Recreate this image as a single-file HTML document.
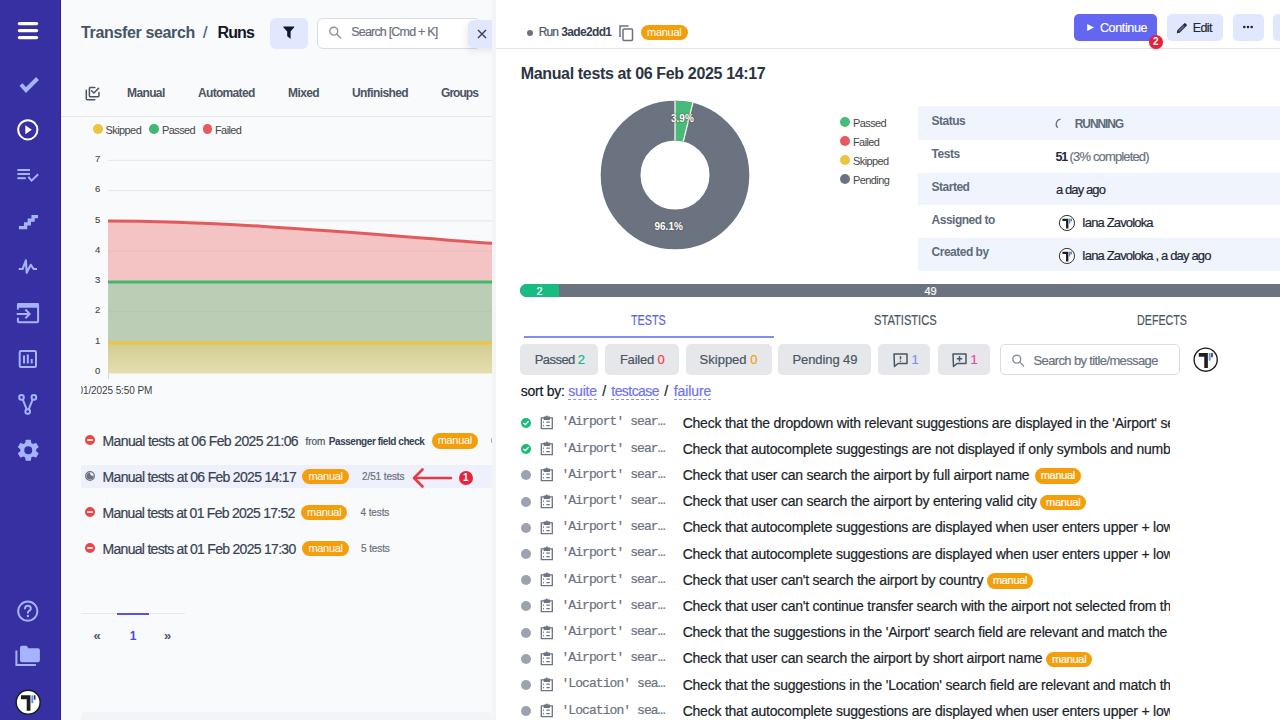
<!DOCTYPE html>
<html><head><meta charset="utf-8">
<style>
*{box-sizing:border-box;margin:0;padding:0}
html,body{width:1280px;height:720px;overflow:hidden;background:#fff;font-family:"Liberation Sans",sans-serif;color:#1f2937}
.a{-webkit-text-stroke:0.2px currentColor}
.a[style*="font-weight:bold"],b{-webkit-text-stroke:0}
.a{position:absolute;white-space:nowrap}
#sb{position:absolute;left:0;top:0;width:61px;height:720px;background:#3730a3;border-right:1px solid #2a2390}
#sb svg{position:absolute}
#lp{position:absolute;left:61px;top:0;width:431px;height:720px;background:#f8fafc;overflow:hidden}
#gut{position:absolute;left:492px;top:0;width:4px;height:720px;background:#f3f4f6}
#rp{position:absolute;left:496px;top:0;width:784px;height:720px;background:#fff;overflow:hidden}
.badge{position:absolute;height:15px;border-radius:8px;background:#f59e0b;color:#fff;font-size:11px;line-height:15px;text-align:center;letter-spacing:-0.3px}
</style></head><body>

<div id="sb">
  <!-- hamburger -->
  <svg style="left:16px;top:20px" width="24" height="22" viewBox="0 0 24 22"><g stroke="#fff" stroke-width="3.4" stroke-linecap="round"><line x1="3.5" y1="3.6" x2="20.5" y2="3.6"/><line x1="3.5" y1="10.6" x2="20.5" y2="10.6"/><line x1="3.5" y1="17.6" x2="20.5" y2="17.6"/></g></svg>
  <!-- check -->
  <svg style="left:17px;top:74px" width="24" height="20" viewBox="0 0 24 20"><path d="M4 10.5 L9 16 L20.5 4.5" fill="none" stroke="#a5b4fc" stroke-width="4" stroke-linejoin="miter"/></svg>
  <!-- play circle -->
  <svg style="left:16px;top:118px" width="24" height="24" viewBox="0 0 24 24"><circle cx="11.8" cy="11.8" r="9.6" fill="none" stroke="#fff" stroke-width="2"/><path d="M9.3 7.3 L15.8 11.8 L9.3 16.3Z" fill="#fff"/></svg>
  <!-- list check -->
  <svg style="left:16px;top:166px" width="24" height="20" viewBox="0 0 24 20"><g stroke="#a5b4fc" stroke-width="2" fill="none" stroke-linecap="butt"><line x1="1.4" y1="4" x2="14" y2="4"/><line x1="1.4" y1="8" x2="14" y2="8"/><line x1="1.4" y1="12.2" x2="9.8" y2="12.2"/><path d="M12.3 10.8 L15.6 14.6 L22.2 8.2"/></g></svg>
  <!-- stairs -->
  <svg style="left:17px;top:211px" width="22" height="20" viewBox="0 0 22 20"><path d="M3.6 16.6 H8.6 V12.9 H12.3 V9.2 H16.1 V5.6 H19.4" fill="none" stroke="#a5b4fc" stroke-width="3.3" stroke-linecap="square"/></svg>
  <!-- pulse -->
  <svg style="left:17px;top:257px" width="22" height="18" viewBox="0 0 22 18"><path d="M1.7 12 H5.6 L8.9 3.4 L9.7 15.8 L13.8 7.8 L16.6 12 H20" fill="none" stroke="#a5b4fc" stroke-width="2.1" stroke-linejoin="round" stroke-linecap="butt"/></svg>
  <!-- import -->
  <svg style="left:15px;top:301px" width="26" height="24" viewBox="0 0 26 24"><g fill="none" stroke="#a5b4fc" stroke-width="2" stroke-linecap="butt"><path d="M2.9 8.6 V4 Q2.9 3 3.9 3 H22.1 Q23.1 3 23.1 4 V20.3 Q23.1 21.3 22.1 21.3 H3.9 Q2.9 21.3 2.9 20.3 V16.8"/><path d="M1.7 12.9 H14.6 M10.4 8.5 L14.6 12.9 L10.4 17.3"/></g><rect x="2" y="2.2" width="22" height="4.6" rx="1.2" fill="#a5b4fc"/></svg>
  <!-- chart -->
  <svg style="left:17px;top:348px" width="22" height="22" viewBox="0 0 22 22"><g fill="none" stroke="#a5b4fc" stroke-width="2"><rect x="2.7" y="2.9" width="16.3" height="16.1" rx="1.3"/><path d="M7 15.6 V7.6 M10.8 15.6 V6.4 M14.7 15.6 V11"/></g></svg>
  <!-- fork -->
  <svg style="left:17px;top:393px" width="22" height="23" viewBox="0 0 22 23"><g fill="none" stroke="#a5b4fc" stroke-width="2"><circle cx="4.5" cy="4.4" r="2.3"/><circle cx="16.9" cy="4.4" r="2.3"/><circle cx="10.7" cy="18.6" r="2.3"/><path d="M5.7 6.4 L9.7 16.3 M15.7 6.4 L11.7 16.3"/></g></svg>
  <!-- gear -->
  <svg style="left:14.55px;top:437.05px" width="26.5" height="26.5" viewBox="0 0 24 24"><path fill="#a5b4fc" d="M19.14 12.94c.04-.3.06-.61.06-.94 0-.32-.02-.64-.07-.94l2.03-1.58a.49.49 0 0 0 .12-.61l-1.92-3.32a.49.49 0 0 0-.59-.22l-2.39.96c-.5-.38-1.03-.7-1.62-.94l-.36-2.54a.48.48 0 0 0-.48-.41h-3.84c-.24 0-.43.17-.47.41l-.36 2.54c-.59.24-1.13.57-1.62.94l-2.39-.96a.48.48 0 0 0-.59.22L2.74 8.87c-.12.21-.08.47.12.61l2.03 1.58c-.05.3-.09.63-.09.94s.02.64.07.94l-2.03 1.58a.49.49 0 0 0-.12.61l1.92 3.32c.12.22.37.29.59.22l2.39-.96c.5.38 1.03.7 1.62.94l.36 2.54c.05.24.24.41.48.41h3.84c.24 0 .44-.17.47-.41l.36-2.54c.59-.24 1.13-.56 1.62-.94l2.39.96c.22.08.47 0 .59-.22l1.92-3.32c.12-.22.07-.47-.12-.61l-2.01-1.58zM12 15.6A3.6 3.6 0 1 1 12 8.4a3.6 3.6 0 0 1 0 7.2z"/></svg>
  <!-- help -->
  <svg style="left:16px;top:598.5px" width="24" height="24" viewBox="0 0 24 24"><circle cx="11.8" cy="12.2" r="9.6" fill="none" stroke="#a5b4fc" stroke-width="2"/><path d="M9 9.6 Q9 6.8 11.9 6.8 Q14.8 6.8 14.8 9.4 Q14.8 11 13 11.8 Q11.9 12.4 11.9 13.8" fill="none" stroke="#a5b4fc" stroke-width="2" stroke-linecap="round"/><circle cx="11.9" cy="17" r="1.2" fill="#a5b4fc"/></svg>
  <!-- folders -->
  <svg style="left:14px;top:644px" width="28" height="24" viewBox="0 0 28 24"><path d="M2.4 6.4 V21.1 H21.9" fill="none" stroke="#a5b4fc" stroke-width="2"/><path d="M6 3.8 Q6 1.8 8 1.8 H12.5 L14.6 4.2 H24 Q25.9 4.2 25.9 6.2 V16.3 Q25.9 18.3 24 18.3 H8 Q6 18.3 6 16.3Z" fill="#a5b4fc"/></svg>
  <!-- avatar -->
  <svg style="left:14.48px;top:687.83px" width="28.34" height="28.34" viewBox="0 0 28 28"><circle cx="14" cy="14" r="11.85" fill="#fff" stroke="#1a1a1a" stroke-width="1.4"/><path d="M6.93 7.24 H16.25 V22.5 H12.57 V11.13 H6.93Z" fill="#1e1e1e"/><rect x="17.18" y="7.24" width="1.84" height="7.78" fill="#5b8def"/><rect x="19.64" y="7.24" width="1.64" height="4.3" fill="#333"/></svg>
</div>

<div id="lp"></div>
<!-- left panel content -->
<div class="a" style="left:81px;top:24.56px;font-size:16px;line-height:1;font-weight:bold;color:#475467;letter-spacing:-0.35px">Transfer search</div>
<div class="a" style="left:203px;top:24.56px;font-size:16px;line-height:1;color:#4b5563">/</div>
<div class="a" style="left:217.5px;top:24.56px;font-size:16px;line-height:1;font-weight:bold;color:#101828;letter-spacing:-0.9px">Runs</div>
<div class="a" style="left:270px;top:17.5px;width:38px;height:31px;border-radius:6px;background:#e0e7ff"></div>
<svg class="a" style="left:282px;top:25px" width="14" height="15" viewBox="0 0 14 15"><path d="M1.6 1.6 H11.9 Q12.6 1.6 12.2 2.2 L8.6 6.6 V13.4 Q8.6 14 8.1 13.6 L5.6 11.6 Q5.2 11.3 5.2 10.8 V6.6 L1.3 2.2 Q0.9 1.6 1.6 1.6Z" fill="#111827"/></svg>
<div class="a" style="left:317.3px;top:17.5px;width:163.4px;height:31px;border-radius:6px;background:#fff;border:1px solid #d9dde3"></div>
<svg class="a" style="left:328px;top:26px" width="14" height="14" viewBox="0 0 14 14"><circle cx="5.75" cy="5.15" r="3.95" fill="none" stroke="#8b929c" stroke-width="1.4"/><line x1="8.7" y1="8.1" x2="12.6" y2="11.9" stroke="#8b929c" stroke-width="1.4" stroke-linecap="round"/></svg>
<div class="a" style="left:351.2px;top:26.42px;font-size:12.5px;line-height:1;color:#6b7280;letter-spacing:-0.8px">Search [Cmd + K]</div>
<div class="a" style="left:467.5px;top:20px;width:29px;height:28px;border-radius:6px 0 0 6px;background:#e0e7ff;box-shadow:-2px 3px 6px rgba(0,0,0,0.08)"></div>
<svg class="a" style="left:477px;top:29px" width="10" height="10" viewBox="0 0 10 10"><path d="M1 1 L9 9 M9 1 L1 9" stroke="#374151" stroke-width="1.4"/></svg>

<svg class="a" style="left:84px;top:85px" width="18" height="17" viewBox="0 0 18 17"><g fill="none" stroke="#4b5563" stroke-width="1.5" stroke-linecap="round" stroke-linejoin="round"><path d="M10.8 2.4 H6.4 Q5.4 2.4 5.4 3.4 V10.8 Q5.4 11.8 6.4 11.8 H13.95 Q14.95 11.8 14.95 10.8 V7.5"/><path d="M7.55 5.8 L9.9 8 L14.6 3.3"/><path d="M2.3 5.3 V13.7 Q2.3 14.7 3.3 14.7 H10.8"/></g></svg>
<div class="a" style="left:127px;top:87.24px;font-size:12px;line-height:1;font-weight:bold;color:#4b5563;letter-spacing:-0.62px">Manual</div>
<div class="a" style="left:198px;top:87.24px;font-size:12px;line-height:1;font-weight:bold;color:#4b5563;letter-spacing:-0.68px">Automated</div>
<div class="a" style="left:288px;top:87.24px;font-size:12px;line-height:1;font-weight:bold;color:#4b5563;letter-spacing:-0.6px">Mixed</div>
<div class="a" style="left:352px;top:87.24px;font-size:12px;line-height:1;font-weight:bold;color:#4b5563;letter-spacing:-0.6px">Unfinished</div>
<div class="a" style="left:441px;top:87.24px;font-size:12px;line-height:1;font-weight:bold;color:#4b5563;letter-spacing:-0.95px">Groups</div>
<div class="a" style="left:61px;top:116px;width:431px;height:1px;background:#e5e7eb"></div>

<div class="a" style="left:93.4px;top:124.4px;width:9.6px;height:9.6px;border-radius:50%;background:#ecc440"></div>
<div class="a" style="left:105.6px;top:124.89px;font-size:11px;line-height:1;color:#464646;-webkit-text-stroke:0;letter-spacing:-0.6px">Skipped</div>
<div class="a" style="left:149px;top:124.4px;width:9.6px;height:9.6px;border-radius:50%;background:#3fb96f"></div>
<div class="a" style="left:162px;top:124.89px;font-size:11px;line-height:1;color:#464646;-webkit-text-stroke:0;letter-spacing:-0.6px">Passed</div>
<div class="a" style="left:202.6px;top:124.4px;width:9.6px;height:9.6px;border-radius:50%;background:#e85a5f"></div>
<div class="a" style="left:215px;top:124.89px;font-size:11px;line-height:1;color:#464646;-webkit-text-stroke:0;letter-spacing:-0.6px">Failed</div>

<div class="a" style="right:1179.8px;top:153.96px;font-size:9.5px;line-height:1;color:#444;-webkit-text-stroke:0.1px #444">7</div><div class="a" style="right:1179.8px;top:184.26px;font-size:9.5px;line-height:1;color:#444;-webkit-text-stroke:0.1px #444">6</div><div class="a" style="right:1179.8px;top:214.56px;font-size:9.5px;line-height:1;color:#444;-webkit-text-stroke:0.1px #444">5</div><div class="a" style="right:1179.8px;top:244.86px;font-size:9.5px;line-height:1;color:#444;-webkit-text-stroke:0.1px #444">4</div><div class="a" style="right:1179.8px;top:275.16px;font-size:9.5px;line-height:1;color:#444;-webkit-text-stroke:0.1px #444">3</div><div class="a" style="right:1179.8px;top:305.46px;font-size:9.5px;line-height:1;color:#444;-webkit-text-stroke:0.1px #444">2</div><div class="a" style="right:1179.8px;top:335.76px;font-size:9.5px;line-height:1;color:#444;-webkit-text-stroke:0.1px #444">1</div><div class="a" style="right:1179.8px;top:366.06px;font-size:9.5px;line-height:1;color:#444;-webkit-text-stroke:0.1px #444">0</div>
<svg class="a" style="left:108px;top:148px" width="384" height="240" viewBox="0 0 384 240">
  <defs><linearGradient id="gy" x1="0" y1="0" x2="0" y2="1"><stop offset="0" stop-color="#d2cd93"/><stop offset="1" stop-color="#e4deae"/></linearGradient></defs>
  <line x1="0" y1="12.3" x2="400" y2="12.3" stroke="#e3e6ea" stroke-width="1"/><line x1="0" y1="42.6" x2="400" y2="42.6" stroke="#e3e6ea" stroke-width="1"/><line x1="0" y1="72.9" x2="400" y2="72.9" stroke="#e3e6ea" stroke-width="1"/><line x1="0" y1="103.2" x2="400" y2="103.2" stroke="#e3e6ea" stroke-width="1"/><line x1="0" y1="133.5" x2="400" y2="133.5" stroke="#e3e6ea" stroke-width="1"/><line x1="0" y1="163.8" x2="400" y2="163.8" stroke="#e3e6ea" stroke-width="1"/><line x1="0" y1="194.1" x2="400" y2="194.1" stroke="#e3e6ea" stroke-width="1"/><line x1="0" y1="224.4" x2="400" y2="224.4" stroke="#e3e6ea" stroke-width="1"/>
  <path d="M0 73 C 120 73, 260 86, 384 95.3 V134 H0Z" fill="#f4c3c3"/>
  <rect x="0" y="134" width="384" height="61" fill="#bccdb5"/>
  <rect x="0" y="195" width="384" height="30.5" fill="url(#gy)"/>
  <path d="M0 73 C 120 73, 260 86, 384 95.3" fill="none" stroke="#e45a5c" stroke-width="3"/>
  <line x1="0" y1="134" x2="384" y2="134" stroke="#3fb96f" stroke-width="3"/>
  <line x1="0" y1="195" x2="384" y2="195" stroke="#eec33f" stroke-width="3"/>
  <line x1="0" y1="103.2" x2="384" y2="103.2" stroke="rgba(0,0,0,0.035)" stroke-width="1"/><line x1="0" y1="163.8" x2="384" y2="163.8" stroke="rgba(0,0,0,0.035)" stroke-width="1"/><line x1="0.5" y1="225.5" x2="0.5" y2="231" stroke="#d1d5db" stroke-width="1"/>
</svg>
<div class="a" style="left:81px;top:385.54px;width:100px;height:12px;overflow:hidden"><div class="a" style="right:28.799999999999997px;top:0;font-size:10px;line-height:1;color:#3f3f3f;-webkit-text-stroke:0;letter-spacing:-0.1px">02/01/2025 5:50 PM</div></div>

<!-- runs list -->
<div class="a" style="left:81px;top:465.3px;width:411px;height:22.5px;background:#eef1fb"></div>
<svg class="a" style="left:85px;top:435px" width="10" height="10" viewBox="0 0 10 10"><circle cx="5" cy="5" r="5" fill="#ef4444"/><rect x="2.3" y="4.1" width="5.4" height="1.8" fill="#fff"/></svg><div class="a" style="left:102.6px;top:433.95px;font-size:14px;line-height:1;color:#384252;letter-spacing:-0.636px">Manual tests at 06 Feb 2025 21:06</div>
<svg class="a" style="left:85px;top:471px" width="10" height="10" viewBox="0 0 10 10"><circle cx="5" cy="5" r="4.3" fill="none" stroke="#6b7280" stroke-width="1.3"/><path d="M5 1.5 A3.5 3.5 0 1 0 8.5 5 A3.5 3.5 0 0 1 5 1.5Z" fill="#6b7280"/></svg><div class="a" style="left:102.6px;top:469.95px;font-size:14px;line-height:1;color:#384252;letter-spacing:-0.697px">Manual tests at 06 Feb 2025 14:17</div>
<svg class="a" style="left:85px;top:507px" width="10" height="10" viewBox="0 0 10 10"><circle cx="5" cy="5" r="5" fill="#ef4444"/><rect x="2.3" y="4.1" width="5.4" height="1.8" fill="#fff"/></svg><div class="a" style="left:102.6px;top:505.95px;font-size:14px;line-height:1;color:#384252;letter-spacing:-0.739px">Manual tests at 01 Feb 2025 17:52</div>
<svg class="a" style="left:85px;top:543px" width="10" height="10" viewBox="0 0 10 10"><circle cx="5" cy="5" r="5" fill="#ef4444"/><rect x="2.3" y="4.1" width="5.4" height="1.8" fill="#fff"/></svg><div class="a" style="left:102.6px;top:541.95px;font-size:14px;line-height:1;color:#384252;letter-spacing:-0.712px">Manual tests at 01 Feb 2025 17:30</div>

<div class="a" style="left:305.4px;top:436.54px;font-size:10px;line-height:1;color:#4b5563">from</div>
<div class="a" style="left:328.8px;top:436.54px;font-size:10px;line-height:1;font-weight:bold;color:#344054;letter-spacing:-0.45px">Passenger field check</div>
<div class="badge" style="left:431.6px;top:433.2px;width:46.4px;height:15.5px;line-height:15.5px">manual</div>
<div class="badge" style="left:302.4px;top:468.8px;width:46.4px;height:15.5px;line-height:15.5px">manual</div>
<div class="a" style="left:362px;top:472.04px;font-size:10px;line-height:1;color:#6b7280;letter-spacing:-0.1px">2/51 tests</div>
<svg class="a" style="left:412px;top:467px" width="42" height="22" viewBox="0 0 42 22"><g fill="none" stroke="#ea3943" stroke-width="2.6" stroke-linecap="round" stroke-linejoin="round"><path d="M2.5 11 H39"/><path d="M10.5 2.5 L2 11 L10.5 19.5"/></g></svg>
<div class="a" style="left:458.7px;top:471.3px;width:14px;height:14px;border-radius:50%;background:#e5253a;color:#fff;font-size:10px;font-weight:bold;line-height:14px;text-align:center">1</div>
<div class="badge" style="left:301px;top:504.8px;width:46.4px;height:15.5px;line-height:15.5px">manual</div>
<div class="a" style="left:360.5px;top:508.04px;font-size:10px;line-height:1;color:#6b7280;letter-spacing:-0.1px">4 tests</div>
<div class="badge" style="left:302.4px;top:540.8px;width:46.4px;height:15.5px;line-height:15.5px">manual</div>
<div class="a" style="left:361px;top:544.03px;font-size:10px;line-height:1;color:#6b7280;letter-spacing:-0.1px">5 tests</div>

<!-- pagination -->
<div class="a" style="left:81px;top:613px;width:104px;height:1px;background:#e5e7eb"></div>
<div class="a" style="left:117.2px;top:613px;width:31.4px;height:2px;background:#5850ec"></div>
<div class="a" style="left:93.5px;top:629.3px;font-size:13px;line-height:1;color:#4b5563;font-weight:bold">«</div>
<div class="a" style="left:129.8px;top:630.34px;font-size:12px;line-height:1;color:#4f46e5;font-weight:bold">1</div>
<div class="a" style="left:164px;top:629.3px;font-size:13px;line-height:1;color:#4b5563;font-weight:bold">»</div>
<div class="a" style="left:81px;top:711.5px;width:411px;height:12px;border-radius:5px;background:#f3f4f7"></div>
<div class="a" style="left:491px;top:438px;width:2px;height:4.7px;border-radius:1px;background:#a7adb7"></div>

<div id="gut"></div>
<div id="rp"></div>
<!-- right panel -->
<div class="a" style="left:496px;top:47.5px;width:784px;height:1px;background:#e5e7eb"></div>
<div class="a" style="left:527.2px;top:30.2px;width:6px;height:6px;border-radius:50%;background:#6b7280"></div>
<div class="a" style="left:538.8px;top:25.84px;font-size:12px;line-height:1;color:#4b5563;letter-spacing:-0.9px">Run</div>
<div class="a" style="left:561.3px;top:25.84px;font-size:12px;line-height:1;font-weight:bold;color:#374151;letter-spacing:-0.67px">3ade2dd1</div>
<svg class="a" style="left:618px;top:24px" width="16" height="18" viewBox="0 0 16 18"><g fill="none" stroke="#6b7280" stroke-width="1.5"><path d="M2 13 V2 H10.5"/><rect x="5" y="5" width="9.5" height="11.5" rx="1"/></g></svg>
<div class="badge" style="left:640.9px;top:25.25px;width:46.7px;height:15.2px;line-height:15.2px">manual</div>

<div class="a" style="left:1074.1px;top:14px;width:83px;height:27.3px;border-radius:5px;background:#6366f1"></div>
<svg class="a" style="left:1086px;top:23px" width="9" height="9" viewBox="0 0 9 9"><path d="M1.2 0.9 L8 4.5 L1.2 8.1Z" fill="#fff"/></svg>
<div class="a" style="left:1099.9px;top:21.62px;font-size:12.5px;line-height:1;color:#fff;letter-spacing:-0.35px">Continue</div>
<div class="a" style="left:1166.8px;top:14px;width:55.8px;height:27.3px;border-radius:5px;background:#e0e7ff"></div>
<svg class="a" style="left:1176px;top:22px" width="12" height="12" viewBox="0 0 12 12"><path d="M0.8 11.2 L1.3 8.3 L8.2 1.4 Q8.9 0.7 9.6 1.4 L10.6 2.4 Q11.3 3.1 10.6 3.8 L3.7 10.7Z" fill="#1f2937"/><path d="M2.2 8.6 L7.6 3.2 L8.8 4.4 L3.4 9.8Z" fill="#e0e7ff" opacity="0.35"/></svg>
<div class="a" style="left:1192.7px;top:21.62px;font-size:12.5px;line-height:1;color:#1f2937;letter-spacing:-0.6px">Edit</div>
<div class="a" style="left:1232.9px;top:14px;width:30.7px;height:27.3px;border-radius:5px;background:#e0e7ff"></div>
<svg class="a" style="left:1243px;top:25px" width="10" height="4" viewBox="0 0 10 4"><g fill="#1f2937"><circle cx="1.3" cy="2" r="1.3"/><circle cx="5" cy="2" r="1.3"/><circle cx="8.7" cy="2" r="1.3"/></g></svg>
<div class="a" style="left:1273.4px;top:14px;width:20px;height:27.3px;border-radius:5px;background:#e0e7ff"></div>
<div class="a" style="left:1148.9px;top:35px;width:14px;height:14px;border-radius:50%;background:#e8203a;color:#fff;font-size:10px;font-weight:bold;line-height:14px;text-align:center;box-shadow:0 1px 2px rgba(0,0,0,0.2)">2</div>

<div class="a" style="left:520.75px;top:65.86px;font-size:16px;line-height:1;font-weight:bold;color:#2b3443;letter-spacing:-0.35px">Manual tests at 06 Feb 2025 14:17</div>

<svg class="a" style="left:595px;top:95px" width="160" height="160" viewBox="0 0 160 160">
  <circle cx="80" cy="80" r="54.4" fill="none" stroke="#6b7280" stroke-width="39.8"/>
  <path d="M80 5.7 A74.3 74.3 0 0 1 97.86 7.88 L88.29 46.51 A34.5 34.5 0 0 0 80 45.5Z" fill="#48bb78"/>
  <path d="M80 5.7 V45.5 M97.86 7.88 L88.29 46.51" stroke="#fff" stroke-width="1.2"/>
</svg>
<div class="a" style="left:671px;top:114.2px;font-size:10px;line-height:1;font-weight:bold;color:#fff;text-shadow:0 0 2px #555,0 0 1px #555">3.9%</div>
<div class="a" style="left:654.5px;top:221.84px;font-size:10px;line-height:1;font-weight:bold;color:#fff;text-shadow:0 0 2px #555,0 0 1px #555">96.1%</div>
<div class="a" style="left:840px;top:116.9px;width:10px;height:10px;border-radius:50%;background:#48bb78"></div><div class="a" style="left:853px;top:117.59px;font-size:11px;line-height:1;color:#464646;-webkit-text-stroke:0;letter-spacing:-0.6px">Passed</div>
<div class="a" style="left:840px;top:136px;width:10px;height:10px;border-radius:50%;background:#e85a5f"></div><div class="a" style="left:853px;top:136.69px;font-size:11px;line-height:1;color:#464646;-webkit-text-stroke:0;letter-spacing:-0.6px">Failed</div>
<div class="a" style="left:840px;top:154.9px;width:10px;height:10px;border-radius:50%;background:#ecc440"></div><div class="a" style="left:853px;top:155.59px;font-size:11px;line-height:1;color:#464646;-webkit-text-stroke:0;letter-spacing:-0.6px">Skipped</div>
<div class="a" style="left:840px;top:174.2px;width:10px;height:10px;border-radius:50%;background:#6b7280"></div><div class="a" style="left:853px;top:174.89px;font-size:11px;line-height:1;color:#464646;-webkit-text-stroke:0;letter-spacing:-0.6px">Pending</div>
<div class="a" style="left:918px;top:106.25px;width:362px;height:33.35px;background:#f0f4fc"></div>
<div class="a" style="left:918px;top:172.5px;width:362px;height:32.5px;background:#f0f4fc"></div>
<div class="a" style="left:918px;top:238px;width:362px;height:32.5px;background:#f0f4fc"></div>
<div class="a" style="left:931.6px;top:114.84px;font-size:12px;line-height:1;font-weight:bold;color:#5f6b7a;letter-spacing:-0.5px">Status</div>
<div class="a" style="left:931.6px;top:147.74px;font-size:12px;line-height:1;font-weight:bold;color:#5f6b7a;letter-spacing:-0.5px">Tests</div>
<div class="a" style="left:931.6px;top:180.64px;font-size:12px;line-height:1;font-weight:bold;color:#5f6b7a;letter-spacing:-0.5px">Started</div>
<div class="a" style="left:931.6px;top:213.54px;font-size:12px;line-height:1;font-weight:bold;color:#5f6b7a;letter-spacing:-0.5px">Assigned to</div>
<div class="a" style="left:931.6px;top:246.44px;font-size:12px;line-height:1;font-weight:bold;color:#5f6b7a;letter-spacing:-0.5px">Created by</div>

<svg class="a" style="left:1054px;top:118px" width="12" height="12" viewBox="0 0 12 12"><path d="M6.5 1.2 A5 5 0 0 0 3.8 9.8" fill="none" stroke="#6b7280" stroke-width="1.3"/></svg>
<div class="a" style="left:1074.8px;top:117.84px;font-size:12px;line-height:1;font-weight:bold;color:#5f6b7a;letter-spacing:-1.1px">RUNNING</div>
<div class="a" style="left:1055.5px;top:150.2px;font-size:13px;line-height:1;color:#6b7280;letter-spacing:-0.85px"><b style="color:#1f2937;letter-spacing:-1.3px;font-size:12.5px">51</b> (3% completed)</div>
<div class="a" style="left:1056px;top:183.3px;font-size:13px;line-height:1;color:#1f2937;letter-spacing:-0.9px">a day ago</div>
<svg class="a" style="left:1057.74px;top:214.0px" width="17.92" height="17.92" viewBox="0 0 28 28"><circle cx="14" cy="14" r="11.85" fill="#fff" stroke="#1a1a1a" stroke-width="1.4"/><path d="M6.93 7.24 H16.25 V22.5 H12.57 V11.13 H6.93Z" fill="#1e1e1e"/><rect x="17.18" y="7.24" width="1.84" height="7.78" fill="#5b8def"/><rect x="19.64" y="7.24" width="1.64" height="4.3" fill="#333"/></svg><svg class="a" style="left:1057.74px;top:247.34px" width="17.92" height="17.92" viewBox="0 0 28 28"><circle cx="14" cy="14" r="11.85" fill="#fff" stroke="#1a1a1a" stroke-width="1.4"/><path d="M6.93 7.24 H16.25 V22.5 H12.57 V11.13 H6.93Z" fill="#1e1e1e"/><rect x="17.18" y="7.24" width="1.84" height="7.78" fill="#5b8def"/><rect x="19.64" y="7.24" width="1.64" height="4.3" fill="#333"/></svg>
<div class="a" style="left:1082px;top:216.0px;font-size:13px;line-height:1;color:#1f2937;letter-spacing:-0.84px">Iana Zavoloka</div>
<div class="a" style="left:1082px;top:248.9px;font-size:13px;line-height:1;color:#1f2937;letter-spacing:-0.84px">Iana Zavoloka , a day ago</div>

<div class="a" style="left:520.2px;top:283.9px;width:800px;height:13px;border-radius:6.5px;background:#6b7280;overflow:hidden"><div class="a" style="left:0;top:0;width:38.9px;height:13px;background:#18bb80"></div></div>
<div class="a" style="left:536.5px;top:285.69px;font-size:11px;line-height:1;color:#fff">2</div>
<div class="a" style="left:924.5px;top:285.69px;font-size:11px;line-height:1;color:#fff">49</div>

<div class="a" style="left:630.8px;top:312.95px;font-size:14px;line-height:1;color:#5b5ff0;transform:scaleX(0.77);transform-origin:0 0">TESTS</div>
<div class="a" style="left:873.5px;top:312.95px;font-size:14px;line-height:1;color:#4b5563;transform:scaleX(0.795);transform-origin:0 0">STATISTICS</div>
<div class="a" style="left:1136.8px;top:312.95px;font-size:14px;line-height:1;color:#4b5563;transform:scaleX(0.765);transform-origin:0 0">DEFECTS</div>
<div class="a" style="left:523.7px;top:335.8px;width:250px;height:2.2px;background:#818cf8"></div>
<div class="a" style="left:520.2px;top:344.2px;width:78.3px;height:31px;border-radius:5px;background:#e5e7eb"></div><div class="a" style="left:534.75px;top:353.2px;font-size:13px;line-height:1;color:#4b5563;letter-spacing:-0.56px">Passed <span style="color:#10b981">2</span></div>
<div class="a" style="left:605.4px;top:344.2px;width:73.4px;height:31px;border-radius:5px;background:#e5e7eb"></div><div class="a" style="left:619.9px;top:353.2px;font-size:13px;line-height:1;color:#4b5563;letter-spacing:-0.21px">Failed <span style="color:#ef4444">0</span></div>
<div class="a" style="left:686px;top:344.2px;width:85.6px;height:31px;border-radius:5px;background:#e5e7eb"></div><div class="a" style="left:699.6px;top:353.2px;font-size:13px;line-height:1;color:#4b5563;letter-spacing:0px">Skipped <span style="color:#f59e0b">0</span></div>
<div class="a" style="left:778.4px;top:344.2px;width:92.6px;height:31px;border-radius:5px;background:#e5e7eb"></div><div class="a" style="left:792.5px;top:353.2px;font-size:13px;line-height:1;color:#4b5563;letter-spacing:-0.1px">Pending <span style="color:#4b5563">49</span></div>

<div class="a" style="left:877.8px;top:344.2px;width:52.5px;height:31px;border-radius:5px;background:#e5e7eb"></div>
<svg class="a" style="left:891.5px;top:352px" width="17" height="16" viewBox="0 0 17 16"><path d="M2 2 H15 V11.5 H6 L2.5 14.5Z" fill="none" stroke="#4b5563" stroke-width="1.5" stroke-linejoin="round"/><path d="M8.5 4.2 V7.4" stroke="#4b5563" stroke-width="1.5"/><circle cx="8.5" cy="9.3" r="0.8" fill="#4b5563"/></svg>
<div class="a" style="left:911.5px;top:353.2px;font-size:13px;line-height:1;color:#818cf8">1</div>
<div class="a" style="left:937.5px;top:344.2px;width:52.6px;height:31px;border-radius:5px;background:#e5e7eb"></div>
<svg class="a" style="left:951px;top:352px" width="17" height="16" viewBox="0 0 17 16"><path d="M2 2 H15 V11.5 H6 L2.5 14.5Z" fill="none" stroke="#4b5563" stroke-width="1.5" stroke-linejoin="round"/><path d="M8.5 4 V9.5 M5.8 6.7 H11.2" stroke="#4b5563" stroke-width="1.5"/></svg>
<div class="a" style="left:970.5px;top:353.2px;font-size:13px;line-height:1;color:#ec4899">1</div>
<div class="a" style="left:999.8px;top:344px;width:180.2px;height:31.2px;border-radius:5px;background:#fff;border:1px solid #d9dde3"></div>
<svg class="a" style="left:1011px;top:353.5px" width="14" height="14" viewBox="0 0 14 14"><circle cx="5.75" cy="5.15" r="3.95" fill="none" stroke="#8b929c" stroke-width="1.4"/><line x1="8.7" y1="8.1" x2="12.6" y2="11.9" stroke="#8b929c" stroke-width="1.4" stroke-linecap="round"/></svg>
<div class="a" style="left:1033.5px;top:353.5px;font-size:13px;line-height:1;color:#6b7280;letter-spacing:-0.63px">Search by title/message</div>
<svg class="a" style="left:1192.13px;top:346.03px" width="27.33" height="27.33" viewBox="0 0 28 28"><circle cx="14" cy="14" r="11.85" fill="#fff" stroke="#1a1a1a" stroke-width="1.4"/><path d="M6.93 7.24 H16.25 V22.5 H12.57 V11.13 H6.93Z" fill="#1e1e1e"/><rect x="17.18" y="7.24" width="1.84" height="7.78" fill="#5b8def"/><rect x="19.64" y="7.24" width="1.64" height="4.3" fill="#333"/></svg>

<div class="a" style="left:520.7px;top:384.15px;font-size:14px;line-height:1;color:#111827;letter-spacing:-0.25px">sort by:</div>
<div class="a" style="left:568.3px;top:384.15px;font-size:14px;line-height:1;color:#6f72f2;letter-spacing:-0.2px;border-bottom:1px dashed #8b8ff5;padding-bottom:1px">suite</div>
<div class="a" style="left:602.3px;top:384.15px;font-size:14px;line-height:1;color:#111827">/</div>
<div class="a" style="left:611.3px;top:384.15px;font-size:14px;line-height:1;color:#6f72f2;letter-spacing:-0.55px;border-bottom:1px dashed #8b8ff5;padding-bottom:1px">testcase</div>
<div class="a" style="left:664.2px;top:384.15px;font-size:14px;line-height:1;color:#111827">/</div>
<div class="a" style="left:673.8px;top:384.15px;font-size:14px;line-height:1;color:#6f72f2;letter-spacing:-0.1px;border-bottom:1px dashed #8b8ff5;padding-bottom:1px">failure</div>
<!--TESTS-->
<div class="a" style="left:496px;top:400px;width:674px;height:320px;overflow:hidden">
<svg class="a" style="left:25px;top:18.0px" width="10" height="10" viewBox="0 0 10 10"><circle cx="5" cy="5" r="5" fill="#1aba78"/><path d="M2.6 5.1 L4.3 6.7 L7.4 3.4" fill="none" stroke="#fff" stroke-width="1.3" stroke-linecap="round" stroke-linejoin="round"/></svg>
<svg class="a" style="left:44px;top:15.0px" width="14" height="15" viewBox="0 0 14 15"><g fill="none" stroke="#6b7280" stroke-width="1.3"><path d="M4.3 2.8 H1.3 V13.6 H12.3 V2.8 H9.3"/><path d="M4.3 2.2 H9.3 V4.3 H4.3Z" fill="#6b7280"/><path d="M3.5 6.4 V7.9 M3.5 9.9 V11.4" stroke-width="0.9"/><path d="M6.4 7.2 H9.8 M6.4 10.6 H9.8" stroke-width="1.3"/></g><circle cx="6.8" cy="1.6" r="1" fill="#6b7280"/></svg>
<div class="a" style="left:65.5px;top:15.3px;font-family:'Liberation Mono',monospace;font-size:13px;line-height:1;color:#6b7280;letter-spacing:-0.93px">'Airport' sear…</div>
<div class="a" style="left:186.7px;top:15.65px;font-size:14px;line-height:1;color:#1a1f29;letter-spacing:-0.23px">Check that the dropdown with relevant suggestions are displayed in the 'Airport' search field</div>
<svg class="a" style="left:25px;top:44.2px" width="10" height="10" viewBox="0 0 10 10"><circle cx="5" cy="5" r="5" fill="#1aba78"/><path d="M2.6 5.1 L4.3 6.7 L7.4 3.4" fill="none" stroke="#fff" stroke-width="1.3" stroke-linecap="round" stroke-linejoin="round"/></svg>
<svg class="a" style="left:44px;top:41.2px" width="14" height="15" viewBox="0 0 14 15"><g fill="none" stroke="#6b7280" stroke-width="1.3"><path d="M4.3 2.8 H1.3 V13.6 H12.3 V2.8 H9.3"/><path d="M4.3 2.2 H9.3 V4.3 H4.3Z" fill="#6b7280"/><path d="M3.5 6.4 V7.9 M3.5 9.9 V11.4" stroke-width="0.9"/><path d="M6.4 7.2 H9.8 M6.4 10.6 H9.8" stroke-width="1.3"/></g><circle cx="6.8" cy="1.6" r="1" fill="#6b7280"/></svg>
<div class="a" style="left:65.5px;top:41.5px;font-family:'Liberation Mono',monospace;font-size:13px;line-height:1;color:#6b7280;letter-spacing:-0.93px">'Airport' sear…</div>
<div class="a" style="left:186.7px;top:41.85px;font-size:14px;line-height:1;color:#1a1f29;letter-spacing:-0.23px">Check that autocomplete suggestings are not displayed if only symbols and numbers are entered</div>
<div class="a" style="left:25px;top:70.4px;width:10px;height:10px;border-radius:50%;background:#9ca3af"></div>
<svg class="a" style="left:44px;top:67.4px" width="14" height="15" viewBox="0 0 14 15"><g fill="none" stroke="#6b7280" stroke-width="1.3"><path d="M4.3 2.8 H1.3 V13.6 H12.3 V2.8 H9.3"/><path d="M4.3 2.2 H9.3 V4.3 H4.3Z" fill="#6b7280"/><path d="M3.5 6.4 V7.9 M3.5 9.9 V11.4" stroke-width="0.9"/><path d="M6.4 7.2 H9.8 M6.4 10.6 H9.8" stroke-width="1.3"/></g><circle cx="6.8" cy="1.6" r="1" fill="#6b7280"/></svg>
<div class="a" style="left:65.5px;top:67.7px;font-family:'Liberation Mono',monospace;font-size:13px;line-height:1;color:#6b7280;letter-spacing:-0.93px">'Airport' sear…</div>
<div class="a" style="left:186.7px;top:68.05px;font-size:14px;line-height:1;color:#1a1f29;letter-spacing:-0.23px">Check that user can search the airport by full airport name</div>
<div class="badge" style="left:538.7px;top:68.4px;width:46.4px;height:15.5px;line-height:15.5px">manual</div>
<div class="a" style="left:25px;top:96.6px;width:10px;height:10px;border-radius:50%;background:#9ca3af"></div>
<svg class="a" style="left:44px;top:93.6px" width="14" height="15" viewBox="0 0 14 15"><g fill="none" stroke="#6b7280" stroke-width="1.3"><path d="M4.3 2.8 H1.3 V13.6 H12.3 V2.8 H9.3"/><path d="M4.3 2.2 H9.3 V4.3 H4.3Z" fill="#6b7280"/><path d="M3.5 6.4 V7.9 M3.5 9.9 V11.4" stroke-width="0.9"/><path d="M6.4 7.2 H9.8 M6.4 10.6 H9.8" stroke-width="1.3"/></g><circle cx="6.8" cy="1.6" r="1" fill="#6b7280"/></svg>
<div class="a" style="left:65.5px;top:93.9px;font-family:'Liberation Mono',monospace;font-size:13px;line-height:1;color:#6b7280;letter-spacing:-0.93px">'Airport' sear…</div>
<div class="a" style="left:186.7px;top:94.25px;font-size:14px;line-height:1;color:#1a1f29;letter-spacing:-0.23px">Check that user can search the airport by entering valid city</div>
<div class="badge" style="left:544px;top:94.6px;width:46.4px;height:15.5px;line-height:15.5px">manual</div>
<div class="a" style="left:25px;top:122.8px;width:10px;height:10px;border-radius:50%;background:#9ca3af"></div>
<svg class="a" style="left:44px;top:119.8px" width="14" height="15" viewBox="0 0 14 15"><g fill="none" stroke="#6b7280" stroke-width="1.3"><path d="M4.3 2.8 H1.3 V13.6 H12.3 V2.8 H9.3"/><path d="M4.3 2.2 H9.3 V4.3 H4.3Z" fill="#6b7280"/><path d="M3.5 6.4 V7.9 M3.5 9.9 V11.4" stroke-width="0.9"/><path d="M6.4 7.2 H9.8 M6.4 10.6 H9.8" stroke-width="1.3"/></g><circle cx="6.8" cy="1.6" r="1" fill="#6b7280"/></svg>
<div class="a" style="left:65.5px;top:120.1px;font-family:'Liberation Mono',monospace;font-size:13px;line-height:1;color:#6b7280;letter-spacing:-0.93px">'Airport' sear…</div>
<div class="a" style="left:186.7px;top:120.45px;font-size:14px;line-height:1;color:#1a1f29;letter-spacing:-0.23px">Check that autocomplete suggestions are displayed when user enters upper + lower case letters</div>
<div class="a" style="left:25px;top:149.0px;width:10px;height:10px;border-radius:50%;background:#9ca3af"></div>
<svg class="a" style="left:44px;top:146.0px" width="14" height="15" viewBox="0 0 14 15"><g fill="none" stroke="#6b7280" stroke-width="1.3"><path d="M4.3 2.8 H1.3 V13.6 H12.3 V2.8 H9.3"/><path d="M4.3 2.2 H9.3 V4.3 H4.3Z" fill="#6b7280"/><path d="M3.5 6.4 V7.9 M3.5 9.9 V11.4" stroke-width="0.9"/><path d="M6.4 7.2 H9.8 M6.4 10.6 H9.8" stroke-width="1.3"/></g><circle cx="6.8" cy="1.6" r="1" fill="#6b7280"/></svg>
<div class="a" style="left:65.5px;top:146.3px;font-family:'Liberation Mono',monospace;font-size:13px;line-height:1;color:#6b7280;letter-spacing:-0.93px">'Airport' sear…</div>
<div class="a" style="left:186.7px;top:146.65px;font-size:14px;line-height:1;color:#1a1f29;letter-spacing:-0.23px">Check that autocomplete suggestions are displayed when user enters upper + lower case letters</div>
<div class="a" style="left:25px;top:175.2px;width:10px;height:10px;border-radius:50%;background:#9ca3af"></div>
<svg class="a" style="left:44px;top:172.2px" width="14" height="15" viewBox="0 0 14 15"><g fill="none" stroke="#6b7280" stroke-width="1.3"><path d="M4.3 2.8 H1.3 V13.6 H12.3 V2.8 H9.3"/><path d="M4.3 2.2 H9.3 V4.3 H4.3Z" fill="#6b7280"/><path d="M3.5 6.4 V7.9 M3.5 9.9 V11.4" stroke-width="0.9"/><path d="M6.4 7.2 H9.8 M6.4 10.6 H9.8" stroke-width="1.3"/></g><circle cx="6.8" cy="1.6" r="1" fill="#6b7280"/></svg>
<div class="a" style="left:65.5px;top:172.5px;font-family:'Liberation Mono',monospace;font-size:13px;line-height:1;color:#6b7280;letter-spacing:-0.93px">'Airport' sear…</div>
<div class="a" style="left:186.7px;top:172.85px;font-size:14px;line-height:1;color:#1a1f29;letter-spacing:-0.23px">Check that user can't search the airport by country</div>
<div class="badge" style="left:490.9px;top:173.2px;width:46.4px;height:15.5px;line-height:15.5px">manual</div>
<div class="a" style="left:25px;top:201.4px;width:10px;height:10px;border-radius:50%;background:#9ca3af"></div>
<svg class="a" style="left:44px;top:198.4px" width="14" height="15" viewBox="0 0 14 15"><g fill="none" stroke="#6b7280" stroke-width="1.3"><path d="M4.3 2.8 H1.3 V13.6 H12.3 V2.8 H9.3"/><path d="M4.3 2.2 H9.3 V4.3 H4.3Z" fill="#6b7280"/><path d="M3.5 6.4 V7.9 M3.5 9.9 V11.4" stroke-width="0.9"/><path d="M6.4 7.2 H9.8 M6.4 10.6 H9.8" stroke-width="1.3"/></g><circle cx="6.8" cy="1.6" r="1" fill="#6b7280"/></svg>
<div class="a" style="left:65.5px;top:198.7px;font-family:'Liberation Mono',monospace;font-size:13px;line-height:1;color:#6b7280;letter-spacing:-0.93px">'Airport' sear…</div>
<div class="a" style="left:186.7px;top:199.05px;font-size:14px;line-height:1;color:#1a1f29;letter-spacing:-0.23px">Check that user can't continue transfer search with the airport not selected from the list</div>
<div class="a" style="left:25px;top:227.6px;width:10px;height:10px;border-radius:50%;background:#9ca3af"></div>
<svg class="a" style="left:44px;top:224.6px" width="14" height="15" viewBox="0 0 14 15"><g fill="none" stroke="#6b7280" stroke-width="1.3"><path d="M4.3 2.8 H1.3 V13.6 H12.3 V2.8 H9.3"/><path d="M4.3 2.2 H9.3 V4.3 H4.3Z" fill="#6b7280"/><path d="M3.5 6.4 V7.9 M3.5 9.9 V11.4" stroke-width="0.9"/><path d="M6.4 7.2 H9.8 M6.4 10.6 H9.8" stroke-width="1.3"/></g><circle cx="6.8" cy="1.6" r="1" fill="#6b7280"/></svg>
<div class="a" style="left:65.5px;top:224.9px;font-family:'Liberation Mono',monospace;font-size:13px;line-height:1;color:#6b7280;letter-spacing:-0.93px">'Airport' sear…</div>
<div class="a" style="left:186.7px;top:225.25px;font-size:14px;line-height:1;color:#1a1f29;letter-spacing:-0.23px">Check that the suggestions in the 'Airport' search field are relevant and match the entered</div>
<div class="a" style="left:25px;top:253.8px;width:10px;height:10px;border-radius:50%;background:#9ca3af"></div>
<svg class="a" style="left:44px;top:250.8px" width="14" height="15" viewBox="0 0 14 15"><g fill="none" stroke="#6b7280" stroke-width="1.3"><path d="M4.3 2.8 H1.3 V13.6 H12.3 V2.8 H9.3"/><path d="M4.3 2.2 H9.3 V4.3 H4.3Z" fill="#6b7280"/><path d="M3.5 6.4 V7.9 M3.5 9.9 V11.4" stroke-width="0.9"/><path d="M6.4 7.2 H9.8 M6.4 10.6 H9.8" stroke-width="1.3"/></g><circle cx="6.8" cy="1.6" r="1" fill="#6b7280"/></svg>
<div class="a" style="left:65.5px;top:251.1px;font-family:'Liberation Mono',monospace;font-size:13px;line-height:1;color:#6b7280;letter-spacing:-0.93px">'Airport' sear…</div>
<div class="a" style="left:186.7px;top:251.45px;font-size:14px;line-height:1;color:#1a1f29;letter-spacing:-0.23px">Check that user can search the airport by short airport name</div>
<div class="badge" style="left:550px;top:251.8px;width:46.4px;height:15.5px;line-height:15.5px">manual</div>
<div class="a" style="left:25px;top:280.0px;width:10px;height:10px;border-radius:50%;background:#9ca3af"></div>
<svg class="a" style="left:44px;top:277.0px" width="14" height="15" viewBox="0 0 14 15"><g fill="none" stroke="#6b7280" stroke-width="1.3"><path d="M4.3 2.8 H1.3 V13.6 H12.3 V2.8 H9.3"/><path d="M4.3 2.2 H9.3 V4.3 H4.3Z" fill="#6b7280"/><path d="M3.5 6.4 V7.9 M3.5 9.9 V11.4" stroke-width="0.9"/><path d="M6.4 7.2 H9.8 M6.4 10.6 H9.8" stroke-width="1.3"/></g><circle cx="6.8" cy="1.6" r="1" fill="#6b7280"/></svg>
<div class="a" style="left:65.5px;top:277.3px;font-family:'Liberation Mono',monospace;font-size:13px;line-height:1;color:#6b7280;letter-spacing:-0.93px">'Location' sea…</div>
<div class="a" style="left:186.7px;top:277.65px;font-size:14px;line-height:1;color:#1a1f29;letter-spacing:-0.23px">Check that the suggestions in the 'Location' search field are relevant and match the entered</div>
<div class="a" style="left:25px;top:306.2px;width:10px;height:10px;border-radius:50%;background:#9ca3af"></div>
<svg class="a" style="left:44px;top:303.2px" width="14" height="15" viewBox="0 0 14 15"><g fill="none" stroke="#6b7280" stroke-width="1.3"><path d="M4.3 2.8 H1.3 V13.6 H12.3 V2.8 H9.3"/><path d="M4.3 2.2 H9.3 V4.3 H4.3Z" fill="#6b7280"/><path d="M3.5 6.4 V7.9 M3.5 9.9 V11.4" stroke-width="0.9"/><path d="M6.4 7.2 H9.8 M6.4 10.6 H9.8" stroke-width="1.3"/></g><circle cx="6.8" cy="1.6" r="1" fill="#6b7280"/></svg>
<div class="a" style="left:65.5px;top:303.5px;font-family:'Liberation Mono',monospace;font-size:13px;line-height:1;color:#6b7280;letter-spacing:-0.93px">'Location' sea…</div>
<div class="a" style="left:186.7px;top:303.85px;font-size:14px;line-height:1;color:#1a1f29;letter-spacing:-0.23px">Check that autocomplete suggestions are displayed when user enters upper + lower case letters</div>
</div>
<!--/TESTS-->


</body></html>
